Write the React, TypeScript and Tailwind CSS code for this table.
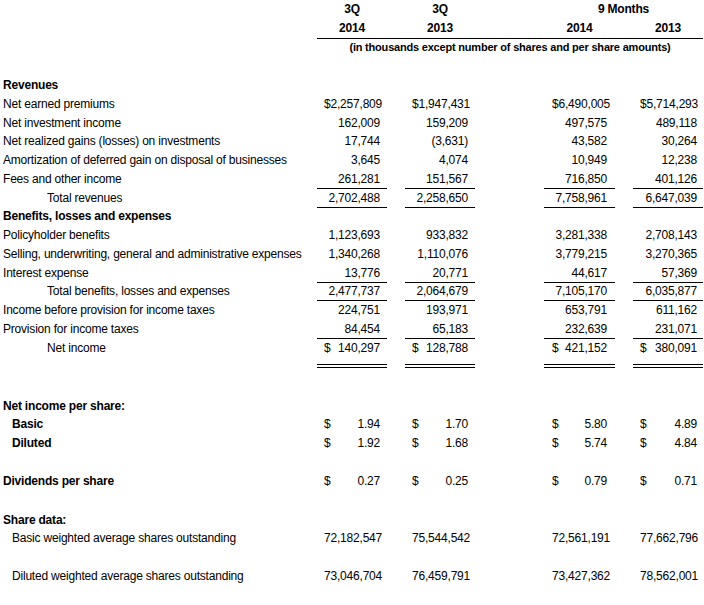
import * as React from 'react';

type Cell = { v: string; d?: boolean };
type RowProps = {
  label: string;
  cells?: (string | Cell)[];
  bold?: boolean;
  indent?: 'none' | 'sm' | 'lg';
  bottom?: boolean; // line below the figure cells
  dbl?: boolean; // double rule under the figures
};

const grid = 'grid grid-cols-[317px_70px_18px_70px_69px_71px_18px_70px]';

function Figure({ c, pr, pl, bottom, dbl }: { c?: string | Cell; pr: string; pl: string; bottom?: boolean; dbl?: boolean }) {
  const cell = typeof c === 'string' ? { v: c } : c;
  return (
    <div
      className={[
        'flex items-start justify-between',
        pr,
        pl,
        bottom ? 'border-b border-black' : '',
        dbl ? 'h-[29px] border-b-4 border-double border-black' : 'h-full',
      ].join(' ')}
    >
      <span className="leading-[18px]">{cell?.d ? '$' : ''}</span>
      <span className="leading-[18px]">{cell?.v ?? ''}</span>
    </div>
  );
}

function Row({ label, cells, bold, indent = 'none', bottom, dbl }: RowProps) {
  const pad = indent === 'lg' ? 'pl-[47px]' : indent === 'sm' ? 'pl-[12px]' : 'pl-[3px]';
  return (
    <div className={`${grid} ${dbl ? 'h-[29px]' : 'h-[18.75px]'}`}>
      <div className={`${pad} leading-[18px] whitespace-nowrap ${bold ? 'font-bold' : ''}`}>{label}</div>
      <Figure c={cells?.[0]} pl="pl-[7px]" pr="pr-[7px]" bottom={bottom} dbl={dbl} />
      <div />
      <Figure c={cells?.[1]} pl="pl-[7px]" pr="pr-[7px]" bottom={bottom} dbl={dbl} />
      <div />
      <Figure c={cells?.[2]} pl="pl-[8px]" pr="pr-[8px]" bottom={bottom} dbl={dbl} />
      <div />
      <Figure c={cells?.[3]} pl="pl-[7px]" pr="pr-[6px]" bottom={bottom} dbl={dbl} />
    </div>
  );
}

export default function App() {
  return (
    <div
      className="w-[704px] h-[605px] bg-white text-black text-[12px] tracking-[-0.2px] overflow-hidden"
      style={{ fontFamily: '"Liberation Sans", Arial, sans-serif' }}
    >
      {/* Column headings */}
      <div className={`${grid} h-[19px] font-bold text-center leading-[19px]`}>
        <div />
        <div>3Q</div>
        <div />
        <div>3Q</div>
        <div />
        <div className="col-span-3">9 Months</div>
      </div>
      <div className={`${grid} h-[19px] font-bold text-center leading-[19px]`}>
        <div />
        <div className="col-span-7 border-b border-black grid grid-cols-[70px_18px_70px_69px_71px_18px_70px]">
          <div>2014</div>
          <div />
          <div>2013</div>
          <div />
          <div>2014</div>
          <div />
          <div>2013</div>
        </div>
      </div>
      <div className={`${grid} h-[19px] font-bold leading-[19px]`}>
        <div />
        <div className="col-span-7 text-center text-[11px] whitespace-nowrap">
          (in thousands except number of shares and per share amounts)
        </div>
      </div>
      <div className="h-[19px]" />

      <Row label="Revenues" bold />
      <Row label="Net earned premiums" cells={['$2,257,809', '$1,947,431', '$6,490,005', '$5,714,293']} />
      <Row label="Net investment income" cells={['162,009', '159,209', '497,575', '489,118']} />
      <Row label="Net realized gains (losses) on investments" cells={['17,744', '(3,631)', '43,582', '30,264']} />
      <Row label="Amortization of deferred gain on disposal of businesses" cells={['3,645', '4,074', '10,949', '12,238']} />
      <Row label="Fees and other income" cells={['261,281', '151,567', '716,850', '401,126']} bottom />
      <Row label="Total revenues" indent="lg" cells={['2,702,488', '2,258,650', '7,758,961', '6,647,039']} bottom />
      <Row label="Benefits, losses and expenses" bold />
      <Row label="Policyholder benefits" cells={['1,123,693', '933,832', '3,281,338', '2,708,143']} />
      <Row label="Selling, underwriting, general and administrative expenses" cells={['1,340,268', '1,110,076', '3,779,215', '3,270,365']} />
      <Row label="Interest expense" cells={['13,776', '20,771', '44,617', '57,369']} bottom />
      <Row label="Total benefits, losses and expenses" indent="lg" cells={['2,477,737', '2,064,679', '7,105,170', '6,035,877']} bottom />
      <Row label="Income before provision for income taxes" cells={['224,751', '193,971', '653,791', '611,162']} />
      <Row label="Provision for income taxes" cells={['84,454', '65,183', '232,639', '231,071']} bottom />
      <Row
        label="Net income"
        indent="lg"
        dbl
        cells={[{ v: '140,297', d: true }, { v: '128,788', d: true }, { v: '421,152', d: true }, { v: '380,091', d: true }]}
      />

      <div className="h-[29px]" />
      <Row label="Net income per share:" bold />
      <Row label="Basic" bold indent="sm" cells={[{ v: '1.94', d: true }, { v: '1.70', d: true }, { v: '5.80', d: true }, { v: '4.89', d: true }]} />
      <Row label="Diluted" bold indent="sm" cells={[{ v: '1.92', d: true }, { v: '1.68', d: true }, { v: '5.74', d: true }, { v: '4.84', d: true }]} />
      <div className="h-[19px]" />
      <Row label="Dividends per share" bold cells={[{ v: '0.27', d: true }, { v: '0.25', d: true }, { v: '0.79', d: true }, { v: '0.71', d: true }]} />
      <div className="h-[20px]" />
      <Row label="Share data:" bold />
      <Row label="Basic weighted average shares outstanding" indent="sm" cells={['72,182,547', '75,544,542', '72,561,191', '77,662,796']} />
      <div className="h-[18.5px]" />
      <Row label="Diluted weighted average shares outstanding" indent="sm" cells={['73,046,704', '76,459,791', '73,427,362', '78,562,001']} />
    </div>
  );
}
